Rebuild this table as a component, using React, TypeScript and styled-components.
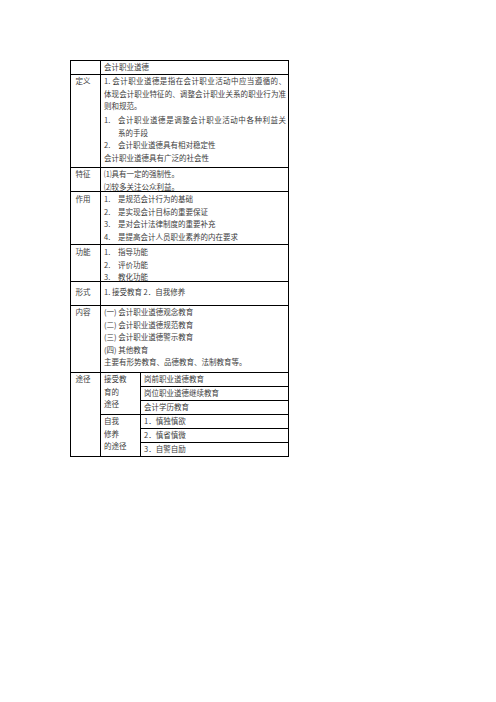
import React from "react";
import styled, { createGlobalStyle } from "styled-components";

const GlobalStyle = createGlobalStyle`
    *, *::before, *::after {
        box-sizing: border-box;
    }
    body {
        margin: 0;
        background: #fff;
        font-family: "Noto Sans CJK SC", "Noto Sans", sans-serif;
    }
`;

const Page = styled.div`
    padding: 60px 0 0 70px;
`;

const Table = styled.div`
    width: 219px;
    border: 1px solid #000;
    font-size: 7.5px;
    line-height: 12.5px;
    color: #3c3c3c;
`;

interface RowProps {
    $h: number;
}

const Row = styled.div<RowProps>`
    display: grid;
    grid-template-columns: 30px 1fr;
    height: ${(p) => p.$h}px;
    border-bottom: 1px solid #000;

    &:last-child {
        border-bottom: none;
    }
`;

interface PadProps {
    $pt?: number;
}

const Label = styled.div<PadProps>`
    border-right: 1px solid #000;
    padding: ${(p) => p.$pt ?? 0}px 0 0 4.5px;
    white-space: nowrap;
`;

const Cell = styled.div<PadProps>`
    padding: ${(p) => p.$pt ?? 0}px 2px 0 3px;
    white-space: nowrap;
`;

const Line = styled.div<{ $justify?: boolean }>`
    text-align: ${(p) => (p.$justify ? "justify" : "left")};
    text-align-last: ${(p) => (p.$justify ? "justify" : "auto")};
`;

const Item = styled.div<{ $gap?: number }>`
    display: grid;
    grid-template-columns: 14px 1fr;
    margin-top: ${(p) => p.$gap ?? 0}px;
`;

const Num = styled.span``;

const Pathway = styled.div`
    display: flex;
    flex-direction: column;
`;

const Route = styled.div<RowProps>`
    display: grid;
    grid-template-columns: 40px 1fr;
    height: ${(p) => p.$h}px;
    border-bottom: 1px solid #000;

    &:last-child {
        border-bottom: none;
    }
`;

const RouteLabel = styled.div`
    border-right: 1px solid #000;
    padding: 0 3px;
    white-space: nowrap;
`;

const Steps = styled.div`
    display: flex;
    flex-direction: column;
`;

const Step = styled.div`
    height: 14px;
    display: flex;
    align-items: center;
    padding: 0 3px;
    border-bottom: 1px solid #000;
    white-space: nowrap;

    &:last-child {
        flex: 1;
        border-bottom: none;
    }
`;

const roles = [
    "是规范会计行为的基础",
    "是实现会计目标的重要保证",
    "是对会计法律制度的重要补充",
    "是提高会计人员职业素养的内在要求",
];

const functions = ["指导功能", "评价功能", "教化功能"];

const contents = [
    "(一) 会计职业道德观念教育",
    "(二) 会计职业道德规范教育",
    "(三) 会计职业道德警示教育",
    "(四) 其他教育",
    "主要有形势教育、品德教育、法制教育等。",
];

const routes = [
    {
        label: ["接受教", "育的", "途径"],
        steps: ["岗前职业道德教育", "岗位职业道德继续教育", "会计学历教育"],
        h: 42,
    },
    {
        label: ["自我", "修养", "的途径"],
        steps: ["1．慎独慎欲", "2．慎省慎微", "3．自警自励"],
        h: 41,
    },
];

export default function App() {
    return (
        <Page>
            <GlobalStyle />
            <Table>
                <Row $h={14}>
                    <Label />
                    <Cell>会计职业道德</Cell>
                </Row>

                <Row $h={93}>
                    <Label>定义</Label>
                    <Cell>
                        <Line $justify>1. 会计职业道德是指在会计职业活动中应当遵循的、</Line>
                        <Line $justify>体现会计职业特征的、调整会计职业关系的职业行为准</Line>
                        <Line>则和规范。</Line>
                        <Item $gap={1.5}>
                            <Num>1.</Num>
                            <div>
                                <Line $justify>会计职业道德是调整会计职业活动中各种利益关</Line>
                                <Line>系的手段</Line>
                            </div>
                        </Item>
                        <Item>
                            <Num>2.</Num>
                            <Line>会计职业道德具有相对稳定性</Line>
                        </Item>
                        <Line>会计职业道德具有广泛的社会性</Line>
                    </Cell>
                </Row>

                <Row $h={24}>
                    <Label>特征</Label>
                    <Cell>
                        <Line>⑴具有一定的强制性。</Line>
                        <Line>⑵较多关注公众利益。</Line>
                    </Cell>
                </Row>

                <Row $h={53}>
                    <Label $pt={1}>作用</Label>
                    <Cell $pt={1}>
                        {roles.map((r, i) => (
                            <Item key={r}>
                                <Num>{i + 1}.</Num>
                                <Line>{r}</Line>
                            </Item>
                        ))}
                    </Cell>
                </Row>

                <Row $h={37}>
                    <Label $pt={1}>功能</Label>
                    <Cell $pt={1}>
                        {functions.map((f, i) => (
                            <Item key={f}>
                                <Num>{i + 1}.</Num>
                                <Line>{f}</Line>
                            </Item>
                        ))}
                    </Cell>
                </Row>

                <Row $h={24}>
                    <Label $pt={4}>形式</Label>
                    <Cell $pt={4}>1. 接受教育 2．自我修养</Cell>
                </Row>

                <Row $h={67}>
                    <Label>内容</Label>
                    <Cell>
                        {contents.map((c) => (
                            <Line key={c}>{c}</Line>
                        ))}
                    </Cell>
                </Row>

                <Row $h={83}>
                    <Label>途径</Label>
                    <Pathway>
                        {routes.map((r) => (
                            <Route key={r.label.join("")} $h={r.h}>
                                <RouteLabel>
                                    {r.label.map((l) => (
                                        <Line key={l}>{l}</Line>
                                    ))}
                                </RouteLabel>
                                <Steps>
                                    {r.steps.map((s) => (
                                        <Step key={s}>{s}</Step>
                                    ))}
                                </Steps>
                            </Route>
                        ))}
                    </Pathway>
                </Row>
            </Table>
        </Page>
    );
}
